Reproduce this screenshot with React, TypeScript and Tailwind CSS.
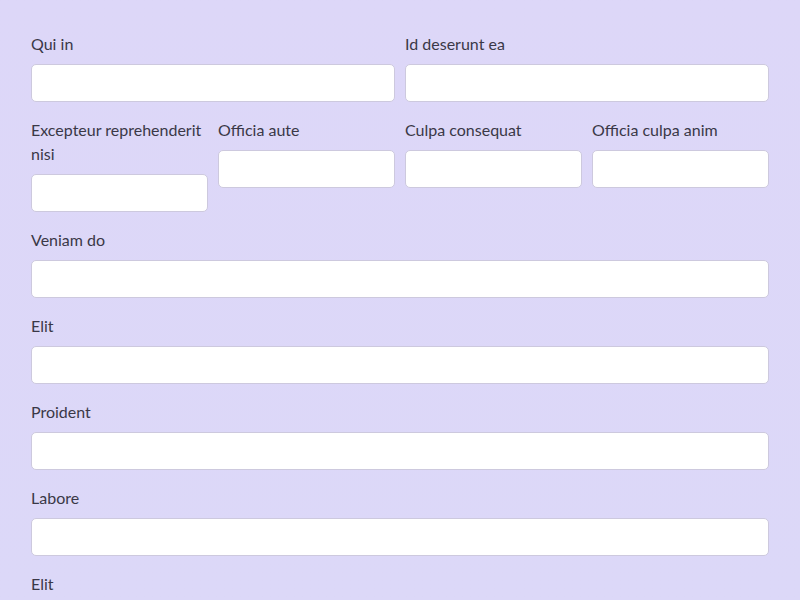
type Field = { label: string; span: "full" | "half" | "quarter" };

const fields: Field[] = [
  { label: "Qui in", span: "half" },
  { label: "Id deserunt ea", span: "half" },
  { label: "Excepteur reprehenderit nisi", span: "quarter" },
  { label: "Officia aute", span: "quarter" },
  { label: "Culpa consequat", span: "quarter" },
  { label: "Officia culpa anim", span: "quarter" },
  { label: "Veniam do", span: "full" },
  { label: "Elit", span: "full" },
  { label: "Proident", span: "full" },
  { label: "Labore", span: "full" },
  { label: "Elit", span: "full" },
];

const spanClass = {
  full: "col-span-4",
  half: "col-span-2",
  quarter: "col-span-1",
};

export default function App() {
  return (
    <div
      className="h-[600px] overflow-hidden bg-gradient-to-b from-[#ddd7f8] to-[#dcd8f8] px-[31px] pt-8 text-[#3a3847]"
      style={{ fontFamily: "Lato, 'Open Sans', sans-serif" }}
    >
      <form className="grid grid-cols-4 gap-x-[10px] gap-y-4 items-start">
        {fields.map((f, i) => (
          <div key={i} className={`${spanClass[f.span]} flex flex-col gap-2`}>
            <label className="text-[16px] leading-6">{f.label}</label>
            <input
              type="text"
              className="h-[38px] w-full rounded-[5px] border border-[#cdc9de] bg-white px-3 outline-none"
            />
          </div>
        ))}
      </form>
    </div>
  );
}
